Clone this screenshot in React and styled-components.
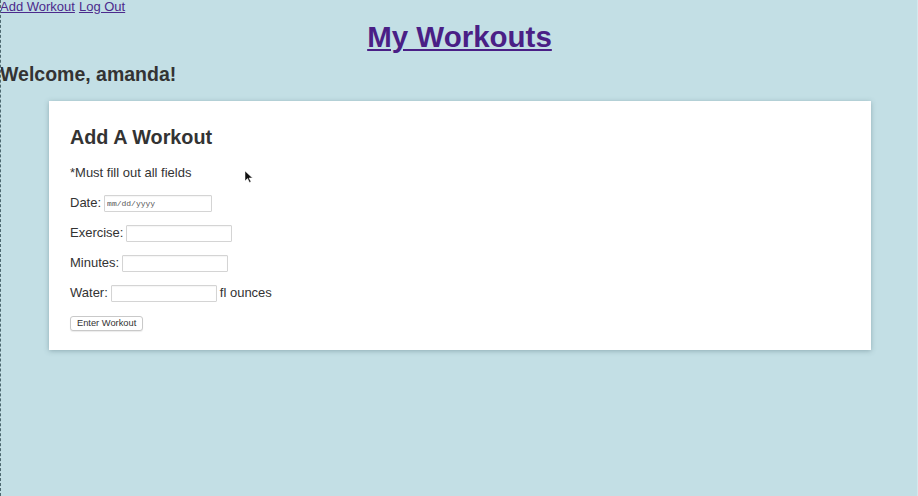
import React from 'react';
import styled, { createGlobalStyle } from 'styled-components';

const GlobalStyle = createGlobalStyle`
  html, body {
    margin: 0;
    padding: 0;
    height: 100%;
  }
  body {
    background: #c3dfe5;
    font-family: "Liberation Sans", Arial, sans-serif;
    color: #333;
  }
`;

const Page = styled.div`
  min-height: 496px;
  box-sizing: border-box;
  border-left: 1px dashed #4d6970;
  border-right: 1px solid #d3e8ec;
  overflow: hidden;
`;

const Nav = styled.nav`
  display: flex;
  gap: 4px;
  font-family: "Liberation Sans", Arial, sans-serif;
  font-size: 13px;
  line-height: 14px;
  margin-left: -1px;
`;

const NavLink = styled.a`
  color: #4b2a8c;
  text-decoration: underline;
`;

const Title = styled.h1`
  margin: 6px 0 0;
  text-align: center;
  font-size: 29.5px;
  line-height: 34px;
  font-weight: bold;
  padding-left: 1px;

  a {
    color: #4a1f86;
    text-decoration: underline;
    text-decoration-thickness: 2px;
    text-underline-offset: 2px;
  }
`;

const Welcome = styled.h2`
  margin: 8px 0 0 -1px;
  font-size: 19.5px;
  line-height: 24px;
  font-weight: bold;
  color: #333;
`;

const Card = styled.section`
  margin: 15px 46px 0 48px;
  background: #fff;
  box-shadow: 0 1px 5px rgba(80, 110, 120, 0.45);
  padding: 24px 20px 19px 21px;
  position: relative;
`;

const CardTitle = styled.h3`
  margin: 0;
  font-size: 19.8px;
  line-height: 24px;
  font-weight: bold;
  color: #333;
`;

const Note = styled.p`
  margin: 16px 0 0;
  font-size: 13px;
  line-height: 16px;
  color: #333;
`;

const Form = styled.form`
  display: flex;
  flex-direction: column;
  gap: 12px;
  margin-top: 13px;
`;

const Row = styled.div`
  display: flex;
  align-items: center;
  gap: 3px;
  font-size: 13px;
  line-height: 18px;
  color: #333;
`;

const Input = styled.input`
  box-sizing: border-box;
  width: ${p => p.$w || 106}px;
  height: 17px;
  border: 1px solid #d4d4d4;
  border-radius: 1px;
  padding: 0 2px;
  font-family: "Liberation Mono", monospace;
  font-size: 8px;
  color: #444;
  background: #fff;
  box-shadow: inset 0 1px 1px rgba(0, 0, 0, 0.04);

  &::placeholder {
    color: #555;
  }
`;

const Button = styled.button`
  align-self: flex-start;
  margin-top: 2px;
  height: 15px;
  padding: 0 6px;
  font-family: "Liberation Sans", Arial, sans-serif;
  font-size: 9.3px;
  line-height: 13px;
  color: #333;
  background: #fff;
  border: 1px solid #c9c9c9;
  border-radius: 3px;
  box-shadow: 0 1px 1px rgba(0, 0, 0, 0.08);
`;

const Cursor = styled.svg`
  position: absolute;
  left: 196px;
  top: 70px;
`;

export default function App() {
  return (
    <>
      <GlobalStyle />
      <Page>
        <Nav>
          <NavLink href="#">Add Workout</NavLink>
          <NavLink href="#">Log Out</NavLink>
        </Nav>
        <Title><a href="#">My Workouts</a></Title>
        <Welcome>Welcome, amanda!</Welcome>
        <Card>
          <CardTitle>Add A Workout</CardTitle>
          <Note>*Must fill out all fields</Note>
          <Form onSubmit={e => e.preventDefault()}>
            <Row>Date: <Input $w={108} placeholder="mm/dd/yyyy" /></Row>
            <Row>Exercise: <Input /></Row>
            <Row>Minutes: <Input /></Row>
            <Row>Water: <Input />fl ounces</Row>
            <Button type="submit">Enter Workout</Button>
          </Form>
          <Cursor width="8" height="12" viewBox="0 0 8 12">
            <path d="M0 0 L0 10 L2.5 7.5 L4.5 11.5 L6 10.8 L4 7 L7.5 7 Z" fill="#111" stroke="#fff" strokeWidth="0.5" />
          </Cursor>
        </Card>
      </Page>
    </>
  );
}
